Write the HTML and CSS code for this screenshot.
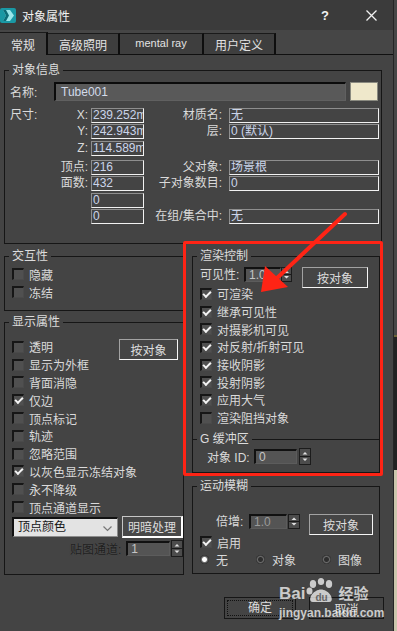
FILE: index.html
```html
<!DOCTYPE html>
<html lang="zh-CN">
<head>
    <meta charset="UTF-8">
    <meta name="viewport" content="width=device-width, initial-scale=1.0">
    <title>对象属性</title>
    <link rel="stylesheet" href="styles.css">
</head>
<body>
<div class="screen">
    <div class="win">
        <div class="titlebar">
            <svg class="app-icon" width="17" height="17" viewBox="0 0 17 17">
                <rect x="0" y="1" width="16" height="15" rx="2" fill="#1a98a4"/>
                <path d="M3 3 H10 L14 8.5 L10 14 H3 L6 8.5 Z" fill="#9ae6ea"/>
                <path d="M3 3 H6 L9 8.5 L6 14 H3 L6 8.5 Z" fill="#0d6d78"/>
            </svg>
            <span class="title">对象属性</span>
            <span class="help">?</span>
            <svg class="close" width="11" height="11" viewBox="0 0 11 11"><path d="M0.5 0.5 L10.5 10.5 M10.5 0.5 L0.5 10.5" stroke="#f2f2f2" stroke-width="1.3"/></svg>
        </div>

        <div class="tabs">
            <div class="tab active">常规</div>
            <div class="tab">高级照明</div>
            <div class="tab">mental ray</div>
            <div class="tab">用户定义</div>
        </div>

        <div class="panel">
            <!-- 对象信息 -->
            <fieldset class="group info">
                <legend>对象信息</legend>
                <div class="info-body">
                    <div class="name-row">
                        <span class="name-lbl">名称:</span>
                        <div class="name-field">Tube001</div>
                        <div class="swatch"></div>
                    </div>
                    <div class="info-grid">
                        <span class="lbl">尺寸:</span>
                        <span class="lbl r">X:</span>
                        <div class="field">239.252mm</div>
                        <span class="lbl r">材质名:</span>
                        <div class="field wide">无</div>

                        <span></span>
                        <span class="lbl r">Y:</span>
                        <div class="field">242.943mm</div>
                        <span class="lbl r">层:</span>
                        <div class="field wide">0 (默认)</div>

                        <span></span>
                        <span class="lbl r">Z:</span>
                        <div class="field">114.589mm</div>
                        <span></span>
                        <span></span>

                        <span></span>
                        <span class="lbl r">顶点:</span>
                        <div class="field">216</div>
                        <span class="lbl r">父对象:</span>
                        <div class="field wide">场景根</div>

                        <span></span>
                        <span class="lbl r">面数:</span>
                        <div class="field">432</div>
                        <span class="lbl r">子对象数目:</span>
                        <div class="field wide">0</div>

                        <span></span>
                        <span></span>
                        <div class="field">0</div>
                        <span></span>
                        <span></span>

                        <span></span>
                        <span></span>
                        <div class="field">0</div>
                        <span class="lbl r">在组/集合中:</span>
                        <div class="field wide">无</div>
                    </div>
                </div>
            </fieldset>

            <div class="cols">
                <div class="col-left">
                    <fieldset class="group interact">
                        <legend>交互性</legend>
                        <div class="group-body">
                            <div class="row"><span class="check"></span>隐藏</div>
                            <div class="row"><span class="check"></span>冻结</div>
                        </div>
                    </fieldset>

                    <fieldset class="group display">
                        <legend>显示属性</legend>
                        <div class="group-body">
                            <div class="display-top">
                                <div class="list">
                                    <div class="row"><span class="check"></span>透明</div>
                                    <div class="row"><span class="check"></span>显示为外框</div>
                                    <div class="row"><span class="check"></span>背面消隐</div>
                                    <div class="row"><span class="check on"></span>仅边</div>
                                    <div class="row"><span class="check"></span>顶点标记</div>
                                    <div class="row"><span class="check"></span>轨迹</div>
                                    <div class="row"><span class="check"></span>忽略范围</div>
                                    <div class="row"><span class="check on"></span>以灰色显示冻结对象</div>
                                    <div class="row"><span class="check"></span>永不降级</div>
                                    <div class="row"><span class="check"></span>顶点通道显示</div>
                                </div>
                                <button class="btn by-obj-left">按对象</button>
                            </div>
                            <div class="combo-row">
                                <div class="select">顶点颜色
                                    <svg class="chev" width="9" height="6" viewBox="0 0 9 6"><path d="M0.5 0.5 L4.5 4.5 L8.5 0.5" fill="none" stroke="#777" stroke-width="1.2"/></svg>
                                </div>
                                <button class="btn shade">明暗处理</button>
                            </div>
                            <div class="map-row">
                                <span class="map-lbl">贴图通道:</span>
                                <div class="spin-input map-input">1</div>
                                <div class="spin-arrows tall">
                                    <svg width="10" height="15" viewBox="0 0 10 15"><path d="M2.5 5.5 L5 3 L7.5 5.5Z M2.5 9.5 L5 12 L7.5 9.5Z" fill="#e0e0e0"/><path d="M0 7.5 H10" stroke="#1a1a1a"/></svg>
                                </div>
                            </div>
                        </div>
                    </fieldset>
                </div>

                <div class="col-right">
                    <fieldset class="group render">
                        <legend>渲染控制</legend>
                        <div class="render-body">
                            <div class="vis-row">
                                <span class="vis-lbl">可见性:</span>
                                <div class="spin-input vis-input">1.0</div>
                                <div class="spin-arrows">
                                    <svg width="9" height="13" viewBox="0 0 9 13"><path d="M2 5 L4.5 2.5 L7 5Z M2 8 L4.5 10.5 L7 8Z" fill="#e0e0e0"/><path d="M0 6.5 H9" stroke="#1a1a1a"/></svg>
                                </div>
                                <button class="btn by-obj-vis">按对象</button>
                            </div>
                            <div class="row r2"><span class="check on"></span>可渲染</div>
                            <div class="row r2"><span class="check on"></span>继承可见性</div>
                            <div class="row r2"><span class="check on"></span>对摄影机可见</div>
                            <div class="row r2"><span class="check on"></span>对反射/折射可见</div>
                            <div class="row r2"><span class="check on"></span>接收阴影</div>
                            <div class="row r2"><span class="check on"></span>投射阴影</div>
                            <div class="row r2"><span class="check on"></span>应用大气</div>
                            <div class="row r2"><span class="check"></span>渲染阻挡对象</div>
                        </div>
                        <fieldset class="group gbuf">
                            <legend>G 缓冲区</legend>
                            <div class="gbuf-row">
                                <span class="id-lbl">对象 ID:</span>
                                <div class="spin-input id-input">0</div>
                                <div class="spin-arrows id-arrows">
                                    <svg width="10" height="15" viewBox="0 0 10 15"><path d="M2.5 5.5 L5 3 L7.5 5.5Z M2.5 9.5 L5 12 L7.5 9.5Z" fill="#e0e0e0"/><path d="M0 7.5 H10" stroke="#1a1a1a"/></svg>
                                </div>
                            </div>
                        </fieldset>
                    </fieldset>

                    <fieldset class="group blur">
                        <legend>运动模糊</legend>
                        <div class="blur-body">
                            <div class="mult-row">
                                <span class="mult-lbl">倍增:</span>
                                <div class="spin-input mult-input">1.0</div>
                                <div class="spin-arrows">
                                    <svg width="10" height="13" viewBox="0 0 10 13"><path d="M2.5 5 L5 2.5 L7.5 5Z M2.5 8 L5 10.5 L7.5 8Z" fill="#e0e0e0"/><path d="M0 6.5 H10" stroke="#1a1a1a"/></svg>
                                </div>
                                <button class="btn by-obj-blur">按对象</button>
                            </div>
                            <div class="row enable"><span class="check on"></span>启用</div>
                            <div class="radio-row">
                                <span class="opt"><span class="radio on"></span>无</span>
                                <span class="opt o2"><span class="radio"></span>对象</span>
                                <span class="opt o3"><span class="radio"></span>图像</span>
                            </div>
                        </div>
                    </fieldset>
                </div>
            </div>

            <div class="actions">
                <button class="btn-dlg ok"><span>确定</span></button>
                <button class="btn-dlg">取消</button>
            </div>
        </div>

        <!-- 标注 -->
        <div class="mark-box"></div>
        <svg class="mark-arrow" width="393" height="631" viewBox="0 0 393 631">
            <path d="M345 214 L276 279" stroke="#ff2415" stroke-width="4" stroke-linecap="round"/>
            <path d="M261 292 L265 266 L288 287 Z" fill="#ff2415"/>
        </svg>

        <div class="watermark">
            <div class="wm-top">
                <span class="wm-bai">Bai</span>
                <svg class="wm-paw" width="30" height="26" viewBox="0 0 30 26">
                    <ellipse cx="7" cy="6" rx="3.2" ry="4" fill="#fff"/>
                    <ellipse cx="15" cy="3.5" rx="3.2" ry="3.5" fill="#fff"/>
                    <ellipse cx="23" cy="6" rx="3.2" ry="4" fill="#fff"/>
                    <ellipse cx="3.5" cy="13" rx="3" ry="3.5" fill="#fff"/>
                    <path d="M7 24 C2 24 4 16 10 13 C13 11 17 11 20 13 C26 16 28 24 23 24 Z" fill="#fff"/>
                </svg>
                <span class="wm-du">du</span>
                <span class="wm-jy">经验</span>
            </div>
            <div class="wm-url">jingyan.baidu.com</div>
        </div>
    </div>
    <div class="edge"></div>
</div>
</body>
</html>
```

FILE: styles.css
```css
* {
    box-sizing: border-box;
}

body {
    margin: 0;
    background: #444444;
    font-family: "Liberation Sans", "Noto Sans CJK SC", sans-serif;
    font-size: 12px;
    color: #dadada;
}

.screen {
    display: flex;
    width: 397px;
    height: 631px;
    overflow: hidden;
}

.win {
    position: relative;
    width: 393px;
    height: 631px;
    background: #444444;
}

.edge {
    width: 4px;
    border-left: 1px solid #252525;
    background: linear-gradient(#474747 0 335px, #6d6438 335px 337px, #222222 337px 470px, #ccc7ad 470px);
}

/* title bar */
.titlebar {
    display: flex;
    align-items: center;
    height: 30px;
    background: #3b3b3b;
    color: #f2f2f2;
}

.app-icon {
    flex: none;
}

.title {
    margin-left: 5px;
    font-size: 12px;
}

.help {
    margin-left: auto;
    font-size: 13px;
    font-weight: bold;
}

.close {
    margin: 0 16px 0 37px;
}

/* tabs */
.tabs {
    display: flex;
    align-items: flex-end;
    height: 25px;
    background: #464646;
    border-bottom: 1px solid #101010;
}

.tab {
    height: 21px;
    padding-top: 2px;
    text-align: center;
    background: #3e3e3e;
    border-top: 1px solid #1a1a1a;
    border-right: 2px solid #0e0e0e;
    color: #e2e2e2;
}

.tab:nth-child(1) { width: 48px; }
.tab:nth-child(2) { width: 72px; }
.tab:nth-child(3) { width: 84px; font-size: 11px; padding-top: 3px; }
.tab:nth-child(4) { width: 72px; }

.tab.active {
    height: 23px;
    margin-bottom: -1px;
    padding-top: 3px;
    background: #444444;
}

/* group boxes */
.group {
    margin: 0;
    padding: 0;
    min-width: 0;
    border: 1px solid #161616;
}

.group > legend {
    height: 15px;
    margin-left: 4px;
    padding: 0 3px;
    line-height: 15px;
    color: #dcdcdc;
}

.info {
    margin: 8px 11px 0 4px;
}

.info-body {
    padding: 4px 0 19px 5px;
}

.name-row {
    display: flex;
    align-items: center;
    height: 19px;
}

.name-lbl {
    width: 44px;
}

.name-field {
    width: 292px;
    height: 19px;
    padding-left: 5px;
    line-height: 16px;
    background: #595959;
    border-top: 2px solid #0b0b0b;
    border-left: 2px solid #0b0b0b;
    border-right: 1px solid #606060;
    border-bottom: 1px solid #606060;
    color: #d3dbea;
}

.swatch {
    width: 28px;
    height: 19px;
    margin-left: 4px;
    background: #efe8cb;
    border: 1px solid #8a8a80;
}

.info-grid {
    display: grid;
    grid-template-columns: 40px 38px 56px 78px 157px;
    grid-template-rows: 16px 17px 19px 16px 17px 16px 15px;
    margin-top: 7px;
}

.lbl {
    line-height: 15px;
    white-space: nowrap;
}

.lbl.r {
    justify-self: end;
}

.field {
    width: 53px;
    height: 15px;
    margin-left: 3px;
    padding: 0 1px;
    overflow: hidden;
    white-space: nowrap;
    line-height: 13px;
    background: #444444;
    border: 1px solid;
    border-color: #8e8e8e #f2f2f2 #f2f2f2 #8e8e8e;
    color: #cbd5ea;
}

.field.wide {
    width: 150px;
    margin-left: 7px;
}

/* columns */
.cols {
    display: flex;
    gap: 8px;
    margin: 5px 0 0 4px;
    height: 326px;
}

.col-left {
    width: 180px;
}

.col-right {
    width: 188px;
}

.group-body {
    padding-left: 7px;
}

.row {
    display: flex;
    align-items: center;
    height: 18px;
    white-space: nowrap;
}

.check {
    position: relative;
    flex: none;
    width: 12px;
    height: 12px;
    margin-right: 5px;
    background: #505050;
    border-top: 2px solid #161616;
    border-left: 2px solid #161616;
    border-right: 1px solid #4a4a4a;
    border-bottom: 1px solid #4a4a4a;
}

.check.on::after {
    content: "";
    position: absolute;
    left: 1px;
    top: 1px;
    width: 6px;
    height: 3px;
    border-left: 2px solid #f4f4f4;
    border-bottom: 2px solid #f4f4f4;
    transform: rotate(-45deg);
}

.interact .group-body {
    padding-top: 1px;
    padding-bottom: 9px;
}

.display {
    margin-top: 4px;
}

.display .group-body {
    padding-top: 8px;
    padding-bottom: 18px;
}

.display-top {
    display: flex;
}

.display .list {
    flex: 1;
    min-width: 0;
}

.display .list .row {
    height: 17.8px;
}

.btn {
    height: 21px;
    padding: 0;
    font: inherit;
    color: #dddddd;
    background: #454545;
    border: 1px solid;
    border-color: #a2a2a2 #f6f6f6 #f6f6f6 #a2a2a2;
}

.by-obj-left {
    flex: none;
    width: 59px;
    margin: 1px 5px 0 0;
}

.combo-row {
    display: flex;
    align-items: center;
    gap: 4px;
    height: 22px;
}

.select {
    position: relative;
    width: 106px;
    height: 20px;
    padding-left: 4px;
    line-height: 17px;
    background: #e3e3e3;
    color: #151515;
    border-top: 2px solid #111111;
    border-left: 2px solid #111111;
    border-right: 1px solid #8c8c8c;
    border-bottom: 1px solid #8c8c8c;
}

.chev {
    position: absolute;
    right: 5px;
    top: 7px;
}

.shade {
    width: 61px;
    height: 22px;
    background: #484848;
    border-color: #c6c6c6 #ffffff #ffffff #c6c6c6;
    border-width: 1px 2px 2px 1px;
}

.map-row {
    display: flex;
    align-items: center;
    height: 15px;
    margin-top: 3px;
}

.map-lbl {
    width: 110px;
    text-align: right;
    color: #1e1e1e;
    text-shadow: 0 0 1px #555;
}

.spin-input {
    height: 15px;
    padding-left: 3px;
    line-height: 12px;
    background: #545454;
    color: #c4c4c4;
    border-top: 2px solid #111111;
    border-left: 2px solid #111111;
    border-right: 1px solid #5c5c5c;
    border-bottom: 1px solid #5c5c5c;
}

.spin-arrows {
    display: flex;
    height: 15px;
    background: #4c4c4c;
    border: 1px solid #1c1c1c;
}

.spin-arrows.tall {
    height: 17px;
}

.map-input {
    width: 44px;
    margin-left: 5px;
}

.map-row .spin-arrows {
    margin-left: 1px;
    width: 12px;
}

/* render control */
.render-body {
    padding: 3px 0 0 7px;
}

.vis-row {
    display: flex;
    align-items: flex-start;
    height: 18px;
}

.vis-lbl {
    width: 44px;
    line-height: 16px;
}

.vis-input {
    width: 37px;
}

.vis-row .spin-arrows {
    width: 11px;
}

.by-obj-vis {
    width: 66px;
    margin-left: 10px;
}

.render .row.r2 {
    height: 17.7px;
}

.gbuf {
    margin-top: 5px;
    border-width: 1px 0 0 0;
}

.gbuf-row {
    display: flex;
    align-items: center;
    height: 17px;
    margin: 1px 0 7px 14px;
}

.id-lbl {
    width: 47px;
}

.id-input {
    width: 43px;
}

.id-arrows {
    width: 12px;
    height: 17px;
    margin-left: 2px;
}

/* motion blur */
.blur {
    margin-top: 6px;
}

.blur-body {
    padding: 20px 0 4px 7px;
}

.mult-row {
    display: flex;
    align-items: flex-start;
    height: 20px;
}

.mult-lbl {
    width: 49px;
    padding-left: 16px;
    line-height: 16px;
}

.mult-input {
    width: 38px;
    color: #9a9a9a;
}

.mult-row .spin-arrows {
    width: 12px;
    margin-left: 1px;
}

.by-obj-blur {
    width: 64px;
    height: 21px;
    margin-left: 9px;
}

.enable {
    height: 17px;
}

.radio-row {
    display: flex;
    align-items: center;
    height: 18px;
    white-space: nowrap;
}

.opt {
    flex: none;
    display: flex;
    align-items: center;
}

.o2 {
    margin-left: 28px;
}

.o3 {
    margin-left: 26px;
}

.radio {
    flex: none;
    width: 9px;
    height: 9px;
    margin-right: 7px;
    border-radius: 50%;
    background: radial-gradient(circle, #2e2e2e 0 2px, #6a6a6a 3px, #2a2a2a 4.5px);
}

.radio.on {
    background: radial-gradient(circle, #ffffff 0 2px, #6e6e6e 3px, #2a2a2a 4.5px);
}

/* dialog buttons */
.actions {
    display: flex;
    justify-content: flex-end;
    gap: 13px;
    margin-top: 22px;
    padding-right: 9px;
}

.btn-dlg {
    width: 75px;
    height: 22px;
    padding: 0;
    font: inherit;
    color: #dcdcdc;
    background: #444444;
    border: 1px solid #161616;
}

.btn-dlg.ok {
    width: 72px;
    padding: 2px;
}

.btn-dlg.ok span {
    display: block;
    height: 100%;
    line-height: 15px;
    border: 1px dotted #111111;
}

/* annotation */
.mark-box {
    position: absolute;
    left: 183px;
    top: 241px;
    width: 200px;
    height: 235px;
    border: 3px solid #ff2415;
    border-radius: 2px;
}

.mark-arrow {
    position: absolute;
    left: 0;
    top: 0;
    pointer-events: none;
}

.watermark {
    position: absolute;
    left: 279px;
    top: 576px;
    opacity: 0.72;
    color: #ffffff;
    text-shadow: 0 0 1px #333;
}

.wm-top {
    display: flex;
    align-items: flex-end;
    height: 28px;
}

.wm-bai {
    font-size: 17px;
    font-weight: bold;
    line-height: 20px;
}

.wm-paw {
    margin-left: 1px;
}

.wm-du {
    margin-left: -21px;
    width: 21px;
    font-size: 10px;
    font-weight: bold;
    line-height: 12px;
    color: #777;
    text-shadow: none;
}

.wm-jy {
    margin-left: 2px;
    font-size: 15px;
    font-weight: bold;
    line-height: 20px;
}

.wm-url {
    margin-top: 3px;
    font-size: 12px;
    font-weight: bold;
    line-height: 12px;
}
```
